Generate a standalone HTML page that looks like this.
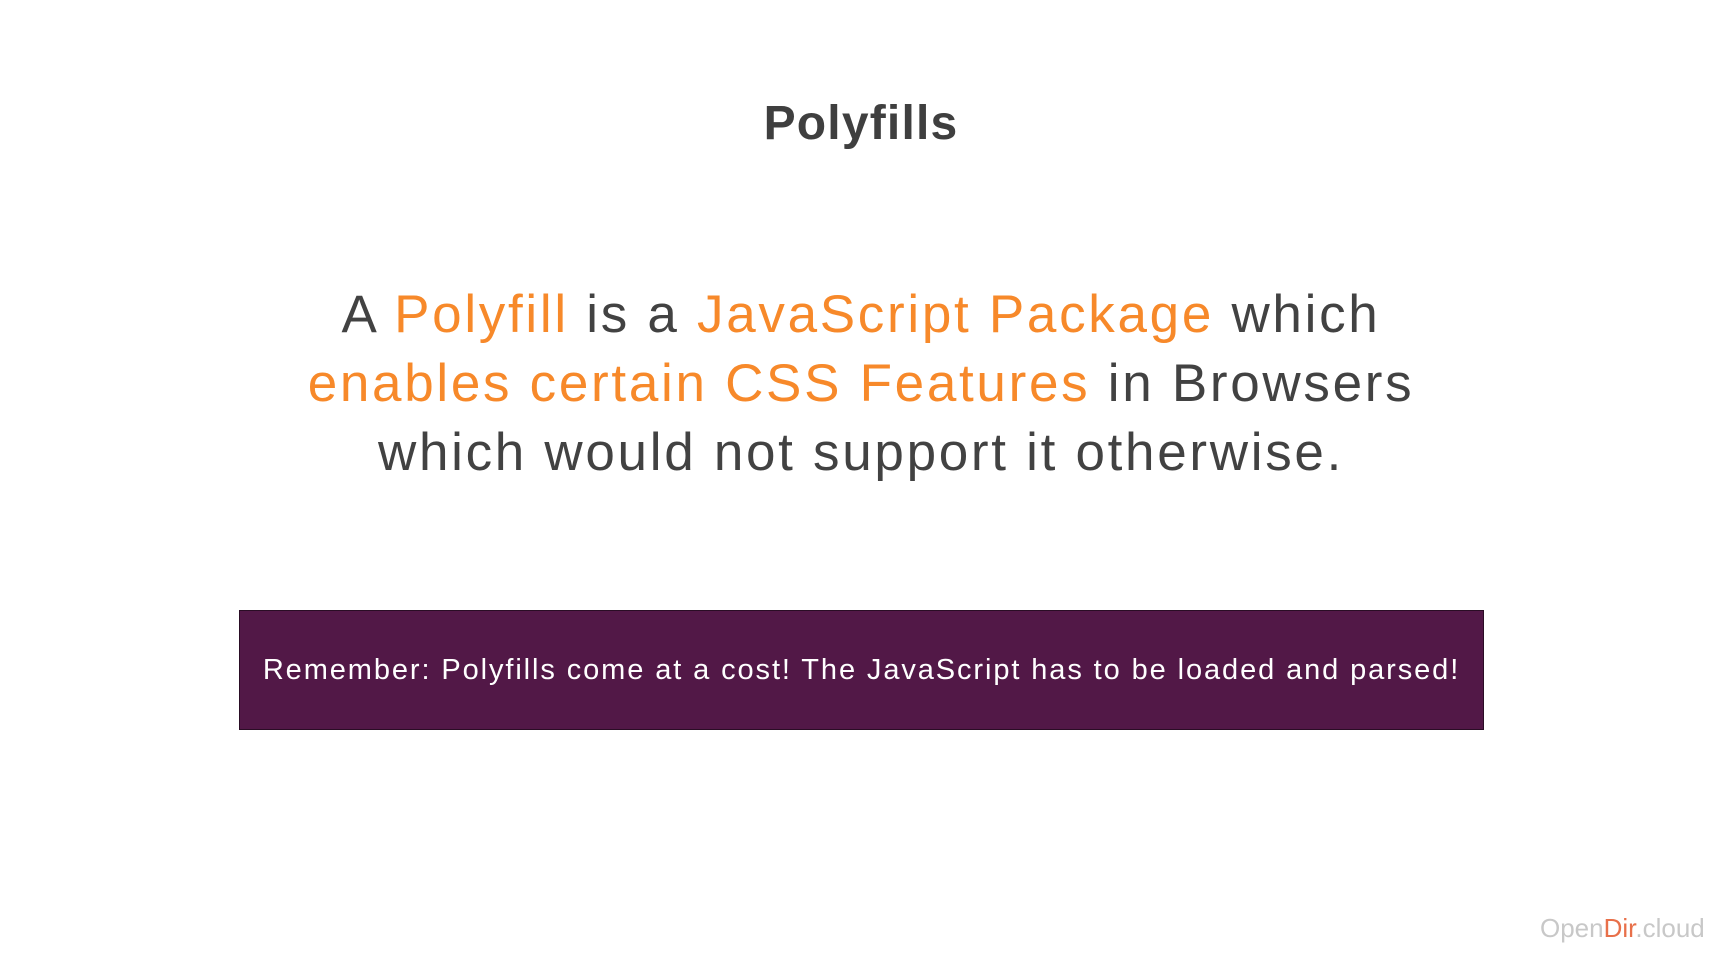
<!DOCTYPE html>
<html><head><style>
html,body{margin:0;padding:0;background:#fff;}
body{width:1722px;height:969px;position:relative;overflow:hidden;font-family:"Liberation Sans",sans-serif;}
.t{position:absolute;left:0;width:1722px;text-align:center;top:94px;font-size:48px;font-weight:bold;color:#3f3f3f;line-height:60px;letter-spacing:1.2px;}
.m{position:absolute;left:0;width:1722px;text-align:center;top:280px;font-size:53px;color:#424242;line-height:69px;letter-spacing:2.7px;}
.o{color:#f7892a;}
.box{position:absolute;left:239px;top:610px;width:1245px;height:120px;background:#521847;border:1px solid #2a0d25;box-sizing:border-box;color:#fff;font-size:29px;text-align:center;line-height:118px;letter-spacing:1.9px;}
.w{position:absolute;left:1540px;top:913px;font-size:26px;color:#c8c8c8;}
</style></head><body>
<div class="t">Polyfills</div>
<div class="m">A <span class="o">Polyfill</span> is a <span class="o">JavaScript Package</span> which<br><span class="o">enables certain CSS Features</span> in Browsers<br>which would not support it otherwise.</div>
<div class="box">Remember: Polyfills come at a cost! The JavaScript has to be loaded and parsed!</div>
<div class="w">Open<span style="color:#e8704a">Dir</span>.cloud</div>
</body></html>
